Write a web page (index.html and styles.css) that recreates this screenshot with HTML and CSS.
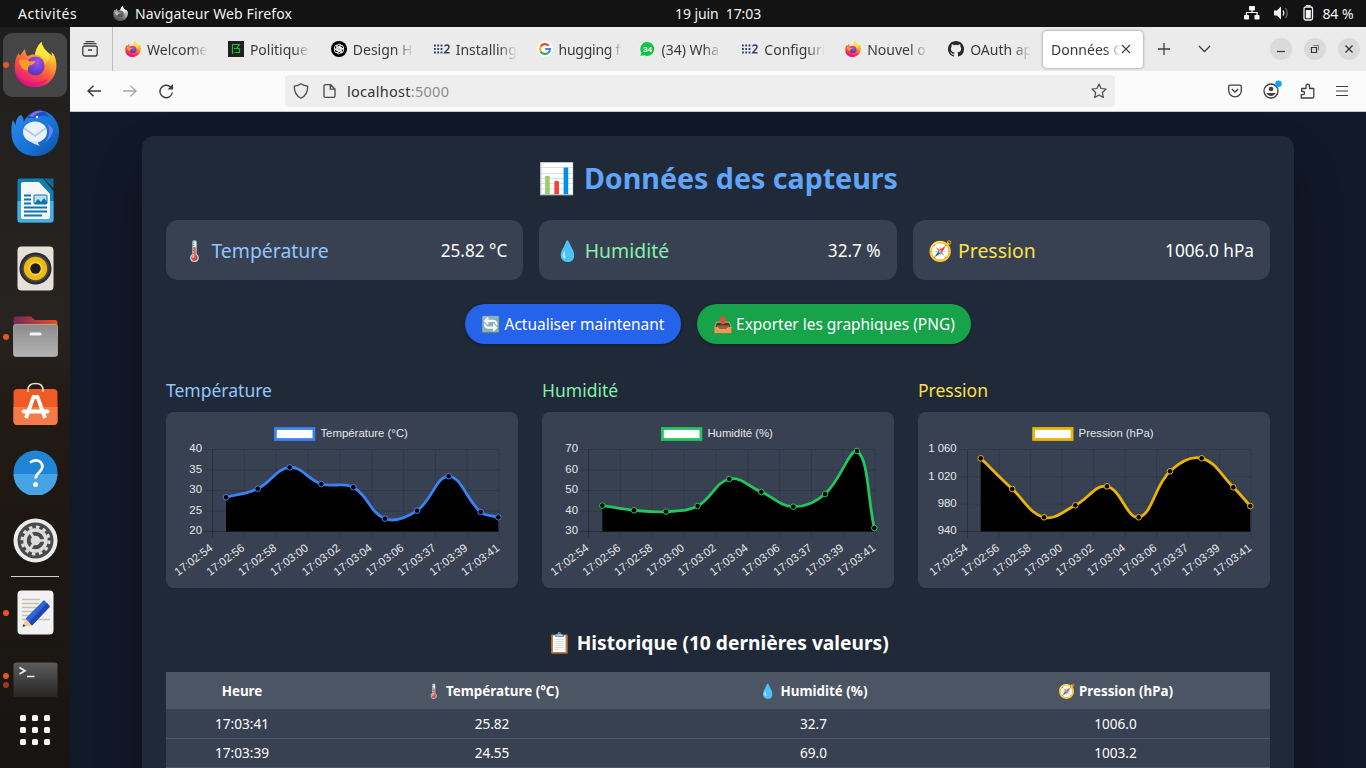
FILE: index.html
```html
<!DOCTYPE html>
<html lang="fr">
<head>
<meta charset="utf-8">
<title>Données des capteurs</title>
<link rel="stylesheet" href="styles.css">
</head>
<body>
<svg class="defs" width="0" height="0" aria-hidden="true">
  <defs>
    <linearGradient id="fxBody" x1=".85" y1="0" x2=".3" y2="1"><stop offset="0" stop-color="#fff44f"/><stop offset=".35" stop-color="#ffa436"/><stop offset=".65" stop-color="#ff4f3f"/><stop offset="1" stop-color="#e0128d"/></linearGradient>
    <linearGradient id="fxTail" x1=".4" y1="0" x2=".6" y2="1"><stop offset="0" stop-color="#fff24a"/><stop offset=".6" stop-color="#ffc02c"/><stop offset="1" stop-color="#ff7a35" stop-opacity=".5"/></linearGradient>
    <radialGradient id="fxGlobe" cx=".6" cy=".3" r=".75"><stop offset="0" stop-color="#a550f0"/><stop offset="1" stop-color="#4a35b5"/></radialGradient>
    <linearGradient id="tb" x1="0" y1="0" x2="1" y2="1"><stop offset="0" stop-color="#2c8df2"/><stop offset=".6" stop-color="#1671d4"/><stop offset="1" stop-color="#0e4ea2"/></linearGradient>
    <linearGradient id="folder" x1="0" y1="0" x2="1" y2="0"><stop offset="0" stop-color="#77295a"/><stop offset="1" stop-color="#e75122"/></linearGradient>
    <linearGradient id="grey" x1="0" y1="0" x2="0" y2="1"><stop offset="0" stop-color="#8c8c8c"/><stop offset="1" stop-color="#b4b4b4"/></linearGradient>
    <linearGradient id="term" x1="0" y1="0" x2="0" y2="1"><stop offset="0" stop-color="#5c5c5c"/><stop offset=".45" stop-color="#444"/><stop offset="1" stop-color="#262423"/></linearGradient>
  </defs>
  <symbol id="firefox" viewBox="0 0 44 44">
    <path d="M28 0C24 4 22 8 21.500 12.500 19 12 16.500 12.500 14 14 12 12 11.500 10 11.500 7 9 9 7.500 11 6.500 13.500L4.500 11C2 15 .8 19 .8 24 .8 36 10 44 22 44 34.500 44 43.400 35 43.400 23 43.400 17 41.500 13 38.500 10L39 14C37 11 33 9 31 6.500 29.500 4.500 28.500 3 28 0Z" fill="url(#fxBody)"/>
    <path d="M28 0C27 7 30 10 34 14 39 19 39 29 34 34 45 30 45 15 38.500 10L39 14C35 10 30 8 28 0ZM21.500 12.500C27 13 31 17 32 22L35 18C32 13 27 10 21.500 12.500Z" fill="url(#fxTail)"/>
    <path d="M28 0C24 4 22 8 21.500 12.500 27 12 33 15 35 19L36 12C32 9 29 6 28 0Z" fill="#ffe640"/>
    <circle cx="22" cy="23.500" r="9.300" fill="url(#fxGlobe)"/>
    <path d="M5 17.500C10 16 14 17 16 19 18 18.500 20.500 19 22 18.500 21.500 21.500 18 22 16 23 14 24.500 14 26 14.500 28 8 27 5.500 23 5 17.500Z" fill="#ff9a28"/>
    <path d="M1 28C6 39 20 43 35 36 29 44 21 44 18 43.800 8 43 2 36 1 28Z" fill="#e5107f" opacity=".65"/>
  </symbol>
  <symbol id="matrix2" viewBox="0 0 16 16">
    <path d="M0 4.500h9M0 8h9M0 11.500h9" fill="none" stroke="#34406a" stroke-width="1.800" stroke-dasharray="1.800 1.500"/>
    <path d="M10.700 5.400C11.200 3.300 15 3.300 15 6 15 8 11.500 10 10.700 11.800H15.500" fill="none" stroke="#34406a" stroke-width="1.500"/>
  </symbol>
</svg>

<header class="topbar">
  <span class="activities">Activités</span>
  <svg class="app-icon" viewBox="0 0 44 44"><use href="#firefox"/></svg>
  <span class="app-name">Navigateur Web Firefox</span>
  <span class="clock">19 juin&nbsp; 17:03</span>
  <span class="tray">
    <svg width="16" height="14" viewBox="0 0 16 14" fill="#f4f4f4"><rect x="5" y="0" width="6" height="4.500" rx=".8"/><rect x="0" y="9" width="5" height="4.500" rx=".8"/><rect x="10.500" y="9" width="5" height="4.500" rx=".8"/><path d="M2.500 9V6.500H13V9M8 4v2.500" fill="none" stroke="#f4f4f4" stroke-width="1.200"/></svg>
    <svg width="15" height="14" viewBox="0 0 15 14"><path d="M0 4.500h3L7 .5v13L3 9.500H0z" fill="#f4f4f4"/><path d="M9 4.500q1.800 2.500 0 5" fill="none" stroke="#ddd" stroke-width="1.300"/><path d="M11.500 2q3.400 5 0 10" fill="none" stroke="#777" stroke-width="1.200"/></svg>
    <svg width="11" height="16" viewBox="0 0 11 16"><rect x="1" y="2" width="8.500" height="13" rx="1.800" fill="none" stroke="#f4f4f4" stroke-width="1.300"/><path d="M3 .6h4.500" stroke="#f4f4f4" stroke-width="1.200"/><path d="M2.800 5h5v8.300h-5z" fill="#f4f4f4"/></svg>
    <span class="battery">84 %</span>
  </span>
</header>

<div class="desktop">
<nav class="dock">
  <div class="dock-item running current"><svg width="43" height="45" viewBox="0 0 44 44" preserveAspectRatio="none"><use href="#firefox"/></svg></div>
  <div class="dock-item"><svg width="48" height="46" viewBox="0 0 48 46">
    <path d="M.5 24C0 17 1 12 2 10L4.500 15C5 9 7 6 10 5 14 9 13 13 11 17 13 9 18 3 25 1 36-2 47 8 48 20 49 36 38 46 24 46 11 46 1 37 .5 24Z" fill="url(#tb)"/>
    <path d="M16 8C21 1 27 .5 31 1 35 1.500 36 4 38 7 32 4 28 7 24 8Z" fill="#1c4fc0"/><path d="M18 6C24 0 29 .5 33 1.500 28 2 24 4 22 7Z" fill="#8c6cf0"/>
    <path d="M35 12C40 18 39 28 33 33 37 31 42 25 42 19Z" fill="#6a83ee"/>
    <ellipse cx="24" cy="22" rx="12" ry="10.500" fill="#eaf2ff"/><path d="M13 18l11 8 11-8" fill="none" stroke="#b1c7e8" stroke-width="1.600"/><path d="M18 31C22 33 25 35 29 36 26 33 27 32 28 31Z" fill="#d8e2ff"/><circle cx="26" cy="7" r="1.200" fill="#fff"/></svg></div>
  <div class="dock-item"><svg width="37" height="45" viewBox="0 0 37 45">
    <path d="M3 .5H26L36.500 13V42Q36.500 44.500 34 44.500H3Q.5 44.500.5 42V3Q.5.500 3 .5Z" fill="#0c80b4"/><path d="M.5 23H36.500V42Q36.500 44.500 34 44.500H3Q.5 44.500.5 42Z" fill="#48ade0"/>
    <path d="M6 4H22L33 16V39Q33 41 31 41H6Q4 41 4 39V6Q4 4 6 4Z" fill="#f6f6f6"/><path d="M27 .5h9.500v10z" fill="#116b96"/>
    <path d="M7 17.500h7M7 21.500h7M7 25.500h7M7 29.500h23M7 33.500h23M7 37.500h18" stroke="#0f74aa" stroke-width="2"/><rect x="17" y="17" width="13" height="9" rx="1" fill="#b7e0f4" stroke="#0f74aa"/><path d="M17 26l4-5 3 3 3-4 3 4v2z" fill="#0f74aa"/></svg></div>
  <div class="dock-item"><svg width="37" height="45" viewBox="0 0 37 45"><rect x=".5" y=".5" width="36" height="44" rx="4" fill="#e5e1d7"/><circle cx="18.500" cy="22.500" r="16" fill="#2a2a35"/><circle cx="18.500" cy="22.500" r="13.800" fill="#444"/><circle cx="18.500" cy="22.500" r="11.700" fill="#eeb712"/><circle cx="18.500" cy="22.500" r="7.200" fill="#f5cf49"/><circle cx="18.500" cy="22.500" r="5.200" fill="#1c1c1e"/></svg></div>
  <div class="dock-item running"><svg width="45" height="41" viewBox="0 0 45 41"><path d="M.5 4Q.5.500 3 .5H18L22 4H42Q44.500 4 44.500 7V20H.5Z" fill="url(#folder)"/><path d="M3 8.500H42Q44.500 8.500 44.500 11V38Q44.500 40.500 42 40.500H3Q.5 40.500.5 38V11Q.5 8.500 3 8.500Z" fill="url(#grey)" stroke="#c4c4c4" stroke-width=".6"/><rect x="16.500" y="16.500" width="12" height="3" rx="1.500" fill="#f4f4f4"/></svg></div>
  <div class="dock-item store"><svg width="45" height="43" viewBox="0 0 45 43"><rect x=".5" y="7" width="44" height="36" rx="4" fill="#ef5a25"/><path d="M.5 25H44.500V39Q44.500 43 40.500 43H4.500Q.5 43 .5 39Z" fill="#f47b45"/><path d="M15 10V8Q15 1.500 22.500 1.500T30 8V10" fill="none" stroke="#fae0b4" stroke-width="1.600"/><path d="M13 36 20.500 15H24.500L32 36" fill="none" stroke="#fff" stroke-width="3.800" stroke-linejoin="round"/><path d="M10.500 29.500H34.500" stroke="#fff" stroke-width="4" stroke-linecap="round"/></svg></div>
  <div class="dock-item"><svg width="45" height="45" viewBox="0 0 45 45"><circle cx="22.500" cy="22.500" r="22" fill="#1d84d6"/><path d="M.5 24H44.500A22 22 0 0 1 .5 24Z" fill="#46a3e6"/><path d="M17 12.500Q23 8.500 27.500 12 32 17 26 22.500 22.500 25.500 22.800 28.500" fill="none" stroke="#fff" stroke-width="2.700"/><circle cx="22.500" cy="34.500" r="2.500" fill="#fff"/></svg></div>
  <div class="dock-item"><svg width="45" height="45" viewBox="0 0 45 45"><circle cx="22.500" cy="22.500" r="22" fill="#ececec"/><circle cx="22.500" cy="22.500" r="18" fill="#4a4a4a"/><circle cx="22.500" cy="22.500" r="13.500" fill="none" stroke="#ddd" stroke-width="3" stroke-dasharray="3.500 3.570"/><circle cx="22.500" cy="22.500" r="10.500" fill="none" stroke="#ddd" stroke-width="3.500"/><circle cx="22.500" cy="22.500" r="6.500" fill="#4a4a4a"/><circle cx="22.500" cy="22.500" r="4.800" fill="#ddd"/><path d="M22.500 22.500H32M22.500 22.500 17 14M22.500 22.500 17 31" stroke="#ddd" stroke-width="2.500"/></svg></div>
  <div class="dock-sep"></div>
  <div class="dock-item running"><svg width="37" height="45" viewBox="0 0 37 45"><rect x=".5" y=".5" width="36" height="44" rx="4" fill="#f1f1f1"/><path d="M5 9.500H23M5 13.500H22M5 17.500H25M5 21.500H20M5 25.500H18M5 29.500H33" stroke="#c5c1b3" stroke-width="1.600"/><path d="M5.500 37 8.500 28.500 15 35.500Z" fill="#f6ca90"/><path d="M5.500 37l1-3 2 2z" fill="#444"/><path d="M8.500 28.500 27 10 33 16.500 15 35.500Z" fill="#2f65dc"/><path d="M12 32 30 13 33 16.500 15 35.500Z" fill="#1f47ad"/></svg></div>
  <div class="dock-item terminal running"><svg width="45" height="35" viewBox="0 0 45 35"><path d="M.5 35V3.500Q.5.500 3.500.500H41.500Q44.500.500 44.500 3.500V35Z" fill="url(#term)"/><path d="M6.500 5.500 12 8.800 6.500 12M14 14.500h7.500" fill="none" stroke="#f2f2f2" stroke-width="1.700"/></svg></div>
  <div class="apps"><i></i><i></i><i></i><i></i><i></i><i></i><i></i><i></i><i></i></div>
</nav>

<section class="browser">
  <div class="tabstrip">
    <div class="tab-history"><svg width="16" height="16" viewBox="0 0 16 16" fill="none" stroke="#3f3f3f" stroke-width="1.300"><rect x=".8" y="5" width="14.400" height="10" rx="2"/><path d="M1.500 2.700H14.500M3.500 .6h9M6 9h4"/></svg></div>
    <div class="tabs">
      <div class="tab"><svg viewBox="0 0 44 44"><use href="#firefox"/></svg><span>Welcome</span></div>
      <div class="tab"><svg viewBox="0 0 16 16"><path fill="#211f23" d="M0 0h16v16H0z"/><path d="M4.500 3V13M4.500 3.500H11.500L9 7 11.500 8V11.500H6.500M6 7.500H9" fill="none" stroke="#15c236" stroke-width="1.200"/></svg><span>Politique</span></div>
      <div class="tab"><svg viewBox="0 0 16 16"><circle cx="8" cy="8" r="8" fill="#000"/><g fill="none" stroke="#fff" stroke-width=".9"><path id="petal" d="M5.800 9.300V5.500Q6 3.200 8 3.200 9.500 3.200 10.300 4.300L7 6.300V8.700"/><use href="#petal" transform="rotate(60 8 8)"/><use href="#petal" transform="rotate(120 8 8)"/><use href="#petal" transform="rotate(180 8 8)"/><use href="#petal" transform="rotate(240 8 8)"/><use href="#petal" transform="rotate(300 8 8)"/></g></svg><span>Design H</span></div>
      <div class="tab"><svg viewBox="0 0 16 16"><use href="#matrix2"/></svg><span>Installing</span></div>
      <div class="tab"><svg viewBox="0 0 16 16"><circle cx="8" cy="8" r="8" fill="#fff"/><g fill="none" stroke-width="2.200"><path d="M11.600 4.700A5 5 0 0 0 3.700 5.500" stroke="#ea4335"/><path d="M3.700 5.500A5 5 0 0 0 3.700 10.500" stroke="#fbbc05"/><path d="M3.700 10.500A5 5 0 0 0 11.200 11.800" stroke="#34a853"/><path d="M11.200 11.800A5 5 0 0 0 13 8H8.200" stroke="#4285f4"/></g></svg><span class="tight">hugging f</span></div>
      <div class="tab"><svg viewBox="0 0 16 16"><path d="M8.300 .5A7.500 7.500 0 1 1 4.800 14.700L.8 15.500 1.800 11.700A7.500 7.500 0 0 1 8.300 .5Z" fill="#15c243" stroke="#fff" stroke-width=".8"/><text x="8.500" y="11" text-anchor="middle" class="badge">34</text></svg><span>(34) Wha</span></div>
      <div class="tab"><svg viewBox="0 0 16 16"><use href="#matrix2"/></svg><span>Configuri</span></div>
      <div class="tab"><svg viewBox="0 0 44 44"><use href="#firefox"/></svg><span>Nouvel o</span></div>
      <div class="tab"><svg viewBox="0 0 16 16"><path fill="#24292f" d="M8 0C3.580 0 0 3.580 0 8c0 3.540 2.290 6.530 5.470 7.590.4.070.55-.17.55-.38v-1.490c-2.230.48-2.700-.95-2.700-.95-.36-.92-.89-1.170-.89-1.170-.73-.5.060-.49.060-.49.8.060 1.230.83 1.230.83.71 1.220 1.870.87 2.330.66.070-.52.280-.87.5-1.070-1.780-.2-3.640-.89-3.640-3.950 0-.87.310-1.590.82-2.150-.08-.2-.36-1.020.08-2.120 0 0 .67-.21 2.200.82a7.600 7.600 0 0 1 4 0c1.530-1.040 2.200-.82 2.200-.82.44 1.100.16 1.920.08 2.120.51.56.82 1.270.82 2.150 0 3.070-1.870 3.750-3.650 3.950.29.25.54.73.54 1.480v2.190c0 .21.150.46.550.38A8 8 0 0 0 16 8c0-4.420-3.580-8-8-8z"/></svg><span>OAuth ap</span></div>
      <div class="tab active"><span>Données C</span><svg viewBox="0 0 10 10"><path d="M1 1l8 8M9 1L1 9" stroke="#3f3f3f" stroke-width="1.100"/></svg></div>
    </div>
    <svg class="plus" width="12" height="12" viewBox="0 0 12 12"><path d="M6 0v12M0 6h12" stroke="#3f3f3f" stroke-width="1.300"/></svg>
    <svg class="chev" width="13" height="8" viewBox="0 0 13 8"><path d="M1 1l5.500 5.500L12 1" fill="none" stroke="#3f3f3f" stroke-width="1.300"/></svg>
    <div class="win">
      <span><svg viewBox="0 0 10 10"><path d="M1 7.500h8" stroke="#333" stroke-width="1.200"/></svg></span>
      <span><svg viewBox="0 0 10 10" fill="none"><path d="M3.500 1.500h5v5" stroke="#777"/><path d="M1.500 3.500h5v5h-5z" stroke="#333" stroke-width="1.200"/></svg></span>
      <span><svg viewBox="0 0 10 10"><path d="M1.500 1.500l7 7M8.500 1.500l-7 7" stroke="#333" stroke-width="1.300"/></svg></span>
    </div>
  </div>

  <div class="navbar">
    <svg class="back" width="14" height="12" viewBox="0 0 14 12"><path d="M14 6H1M6.500.700 1 6l5.500 5.300" fill="none" stroke="#3a3a3a" stroke-width="1.400"/></svg>
    <svg class="fwd" width="14" height="12" viewBox="0 0 14 12"><path d="M0 6h13M7.500.700 13 6l-5.500 5.300" fill="none" stroke="#a9a9a9" stroke-width="1.400"/></svg>
    <svg class="reload" width="15" height="15" viewBox="0 0 15 15"><path d="M13.300 8.500A6.200 6.200 0 1 1 11.500 3" fill="none" stroke="#3a3a3a" stroke-width="1.400"/><path d="M14 0v5.500H8.500z" fill="#3a3a3a"/></svg>
    <div class="urlbar">
      <svg width="16" height="16" viewBox="0 0 16 16"><path d="M8 .8Q11 2.800 14.700 3.200 15 11.500 8 15.200 1 11.500 1.300 3.200 5 2.800 8 .8Z" fill="none" stroke="#4a4a4a" stroke-width="1.300" stroke-linejoin="round"/></svg>
      <svg class="doc" width="13" height="14" viewBox="0 0 13 14"><path d="M2.500.700H7.500L12 5V12Q12 13.300 10.700 13.300H2.500Q1 13.300 1 12V2Q1 .700 2.500.700ZM7.300.700V5.200H12" fill="none" stroke="#4a4a4a" stroke-width="1.300"/></svg>
      <span class="url">localhost<em>:5000</em></span>
      <svg class="star" width="16" height="16" viewBox="0 0 16 16"><path d="M8 1 10.100 5.500 15 6 11.400 9.500 12.300 14.500 8 12.100 3.700 14.500 4.600 9.500 1 6 5.900 5.500Z" fill="none" stroke="#4a4a4a" stroke-width="1.200" stroke-linejoin="round"/></svg>
    </div>
    <div class="tools">
      <svg width="14" height="14" viewBox="0 0 14 14" fill="none" stroke="#3f3f3f" stroke-width="1.300"><path d="M2 1.200H12Q13.300 1.200 13.300 2.500V6.500A6.300 6.300 0 0 1 .7 6.500V2.500Q.7 1.200 2 1.200ZM3.800 5 7 8l3.200-3"/></svg>
      <svg class="account" width="16" height="16" viewBox="0 0 16 16"><circle cx="8" cy="8" r="7" fill="none" stroke="#3f3f3f" stroke-width="1.300"/><circle cx="8" cy="6" r="2.300" fill="#3f3f3f"/><path d="M3.500 10H12.500Q11 13 8 13 5 13 3.500 10Z" fill="#3f3f3f"/><circle class="dot" cx="15.500" cy=".8" r="3.200" fill="#00a8f5"/></svg>
      <svg width="15" height="16" viewBox="0 0 15 16"><path d="M1.200 15H12.500Q13.800 15 13.800 13.800V5.500H9.500V3A1.700 1.700 0 0 0 6 3V5.500H1.700V8.500H3A1.500 1.500 0 0 1 3 11.700H1.200Z" fill="none" stroke="#3f3f3f" stroke-width="1.300" stroke-linejoin="round"/></svg>
      <svg width="12" height="12" viewBox="0 0 12 12"><path d="M0 1.500h12M0 6h12M0 10.500h12" stroke="#3f3f3f" stroke-width="1.200"/></svg>
    </div>
  </div>

  <main class="page">
    <div class="panel">
      <h1><span class="emoji">📊</span> <span class="t">Données des capteurs</span></h1>
      <div class="stats">
        <div class="stat blue"><b><span class="emoji">🌡️</span><span class="t">Température</span></b><span class="v">25.82 °C</span></div>
        <div class="stat green"><b><span class="emoji">💧</span><span class="t">Humidité</span></b><span class="v">32.7 %</span></div>
        <div class="stat yellow"><b><span class="emoji">🧭</span><span class="t">Pression</span></b><span class="v">1006.0 hPa</span></div>
      </div>
      <div class="actions">
        <button class="refresh"><span class="emoji">🔄</span><span class="t">Actualiser maintenant</span></button>
        <button class="export"><span class="emoji">📤</span><span class="t">Exporter les graphiques (PNG)</span></button>
      </div>
      <div class="charts">
        <div class="blue"><h2>Température</h2><div class="chart" id="temp"></div></div>
        <div class="green"><h2>Humidité</h2><div class="chart" id="hum"></div></div>
        <div class="yellow"><h2>Pression</h2><div class="chart" id="pres"></div></div>
      </div>
      <h3><span class="emoji">📋</span><span class="t">Historique (10 dernières valeurs)</span></h3>
      <table>
        <colgroup><col class="c1"><col class="c2"><col class="c3"><col class="c4"></colgroup>
        <thead><tr><th>Heure</th><th><span class="emoji">🌡️</span>Température (°C)</th><th><span class="emoji">💧</span>Humidité (%)</th><th><span class="emoji">🧭</span>Pression (hPa)</th></tr></thead>
        <tbody>
          <tr><td>17:03:41</td><td>25.82</td><td>32.7</td><td>1006.0</td></tr>
          <tr><td>17:03:39</td><td>24.55</td><td>69.0</td><td>1003.2</td></tr>
          <tr><td></td><td></td><td></td><td></td></tr>
        </tbody>
      </table>
    </div>
  </main>
</section>
</div>
<script src="charts.js"></script>
</body>
</html>
```

FILE: styles.css
```css
* { box-sizing: border-box; }
body { margin: 0; width: 1366px; height: 768px; overflow: hidden; background: #111827; font-family: "Noto Sans", "Open Sans", sans-serif; }
.defs { position: absolute; }
svg { display: block; flex: none; }

.topbar { height: 27px; background: #131313; color: #f2f2f2; display: grid; grid-template-columns: 95px 36px 544px 1fr auto; align-items: center; font-size: 14px; letter-spacing: .13px; white-space: nowrap; }
.activities { padding-left: 18px; letter-spacing: .5px; }
.app-icon { width: 15px; height: 15px; justify-self: end; margin: 0 3px 1px 0; filter: grayscale(1) brightness(1.1); }
.app-name { padding-left: 4px; }
.clock { letter-spacing: -.08px; margin-top: -1px; }
.tray { display: flex; align-items: center; padding-right: 12.500px; gap: 14px; }
.tray svg { margin-top: -1px; }
.battery { margin-left: -6px; letter-spacing: -.05px; }

.desktop { display: flex; height: 741px; }
.dock { width: 70px; padding-top: 4px; background: linear-gradient(180deg, #201f1e 0, #272320 40%, #211a15 52%, #1d1712 70%, #171615 100%); }
.dock-item { position: relative; height: 68px; display: flex; align-items: center; justify-content: center; padding: 0 0 1px 0; }
.dock-item > svg { margin-left: .500px; }
.dock-item.current::after { content: ""; position: absolute; inset: 2px 3px; border-radius: 9px; background: #454545; }
.dock-item.current svg { position: relative; z-index: 1; }
.dock-item.running::before { content: ""; position: absolute; z-index: 2; left: 3px; top: 31px; width: 6px; height: 6px; border-radius: 50%; background: #e95420; }
.store svg { margin-top: -3px; }
.dock-sep { height: 1px; margin: 1px 11px 2px; background: #d2cdc9; }
.dock-item.terminal { height: 55px; align-items: flex-start; padding-top: 15px; }
.dock-item.terminal::before { top: 26px; box-shadow: 0 9px 0 #9a3b18; }
.apps { display: grid; grid-template-columns: repeat(3, 6px); gap: 6px; justify-content: center; padding-top: 13px; }
.apps i { height: 6px; border-radius: 1.500px; background: #f5f5f5; }

.browser { flex: 1; min-width: 0; display: flex; flex-direction: column; }
.tabstrip { height: 44px; flex: none; background: #ebebeb; display: flex; align-items: center; color: #3a3a3a; }
.tab-history { width: 43px; height: 44px; border-right: 1px solid #bdbdbd; display: flex; align-items: center; padding-left: 12px; }
.tabs { display: flex; width: 1030px; padding-left: 12px; height: 38px; align-items: center; }
.tab { width: 102.900px; flex: none; display: flex; align-items: center; gap: 6px; font-size: 14px; letter-spacing: 0; }
.tab > svg { width: 16px; height: 16px; }
.tab span { width: 61px; overflow: hidden; white-space: nowrap; line-height: 22px; padding-top: 1px; -webkit-mask-image: linear-gradient(90deg, #000 70%, transparent); mask-image: linear-gradient(90deg, #000 70%, transparent); }
.tab .tight { letter-spacing: -.25px; -webkit-mask-image: linear-gradient(90deg, #000 82%, rgba(0,0,0,.15)); mask-image: linear-gradient(90deg, #000 82%, rgba(0,0,0,.15)); }
.tab.active { width: 100px; height: 37px; background: #fff; border-radius: 4px; box-shadow: 0 0 3px rgba(0,0,0,.45); padding-left: 8.500px; margin-left: -8.500px; gap: 0; }
.tab.active span { width: 70px; -webkit-mask-image: linear-gradient(90deg, #000 78%, transparent); mask-image: linear-gradient(90deg, #000 78%, transparent); }
.tab.active > svg { width: 10px; height: 10px; }
.badge { font: bold 8px "Liberation Sans", sans-serif; fill: #fff; letter-spacing: 0; }
.plus { margin-left: 14.500px; }
.chev { margin-left: 28.500px; }
.win { display: flex; gap: 12px; margin-left: auto; padding-right: 6px; }
.win span { width: 22px; height: 22px; border-radius: 50%; background: #dadada; display: grid; place-items: center; }
.win svg { width: 10px; height: 10px; }

.navbar { height: 41px; flex: none; background: #fbfbfb; border-bottom: 1px solid #c6c6c6; display: flex; align-items: center; }
.back { margin-left: 17px; }
.fwd { margin-left: 22px; }
.reload { margin-left: 22px; }
.urlbar { margin-left: 111px; width: 830px; height: 32px; background: #eee; border-radius: 4px; display: flex; align-items: center; padding: 0 8px; }
.doc { margin-left: 14px; }
.url { margin-left: 11px; font-size: 14.500px; letter-spacing: .28px; color: #333; }
.url em { font-style: normal; color: #8c8c8c; }
.star { margin-left: auto; }
.tools { flex: 1; display: flex; align-items: center; gap: 21px; justify-content: flex-end; padding-right: 18.300px; }
.account { overflow: visible; }

.page { flex: 1; min-height: 0; background: #111827; padding: 24px 72px; overflow: hidden; }
.panel { height: 900px; background: #1f2937; border-radius: 12px; padding: 24px; color: #fff; box-shadow: 0 25px 50px -12px rgba(0,0,0,.4); }
.emoji { font-family: "Noto Color Emoji", sans-serif; font-weight: 400; letter-spacing: 0; }
h1 { margin: 0; height: 36px; line-height: 36px; display: flex; justify-content: center; gap: 8.500px; font-size: 28.600px; color: #60a5fa; }
h1 .emoji { font-size: 30px; margin-top: 1px; }
.stats { display: grid; grid-template-columns: repeat(3, 1fr); gap: 16px; margin-top: 24px; }
.stat { height: 60px; border-radius: 12px; background: #374151; padding: 2px 16px 0; display: flex; justify-content: space-between; align-items: center; line-height: 28px; }
.stat b { font-weight: 400; font-size: 19.400px; display: flex; gap: 4.500px; }
.stat .emoji { font-size: 20px; }
.stat .v { font-size: 17.200px; color: #fff; }
.blue { color: #93c5fd; }
.green { color: #86efac; }
.yellow { color: #fde047; }
.actions { display: flex; justify-content: center; gap: 16px; margin-top: 24px; }
button { height: 40px; border: 0; border-radius: 20px; color: #fff; font-family: inherit; font-size: 15.450px; display: flex; align-items: center; justify-content: center; gap: 3px; padding: 0; white-space: nowrap; box-shadow: 0 1px 3px rgba(0,0,0,.3); }
button .emoji { font-size: 16px; }
.refresh { width: 216px; background: #2563eb; }
.export { width: 274px; background: #16a34a; }
.charts { display: grid; grid-template-columns: repeat(3, 1fr); gap: 24px; margin-top: 32px; }
h2 { margin: 0 0 8px; font-size: 17.500px; font-weight: 400; line-height: 28px; }
.chart { height: 176px; border-radius: 8px; background: #374151; }
.chart text { font-family: "Liberation Sans", Arial, sans-serif; font-size: 11.400px; fill: #e5e7eb; }
h3 { margin: 41px 0 0; height: 28px; line-height: 28px; font-size: 19.200px; display: flex; justify-content: center; gap: 4.500px; }
h3 .emoji { font-size: 20px; }
table { width: 1104px; margin-top: 15px; border-collapse: collapse; table-layout: fixed; text-align: center; font-size: 13.600px; }
.c1 { width: 152px; }
.c2 { width: 348px; }
.c3 { width: 295px; }
.c4 { width: 309px; }
th { height: 37px; padding: 0; background: #4b5563; font-size: 13.400px; line-height: 20px; }
th .emoji { font-size: 14px; margin-right: 3.500px; }
td { height: 29px; padding: 1px 0 0; background: #374151; border-bottom: 1px solid #4b5563; line-height: 20px; }
```

FILE: charts.js
```js
const times = ['17:02:54', '17:02:56', '17:02:58', '17:03:00', '17:03:02', '17:03:04', '17:03:06', '17:03:37', '17:03:39', '17:03:41'];
const TOP = 37.5, BOTTOM = 119.5, RIGHT = 333.2;

// Cubic spline whose handles follow the neighbouring points.
function curve(pts) {
  const t = 0.4;
  const handles = pts.map((p, i) => {
    const a = pts[i - 1] || p, b = pts[i + 1] || p;
    const d1 = Math.hypot(p[0] - a[0], p[1] - a[1]), d2 = Math.hypot(b[0] - p[0], b[1] - p[1]);
    const f1 = t * d1 / (d1 + d2), f2 = t * d2 / (d1 + d2);
    const cap = y => Math.max(TOP, Math.min(BOTTOM, y));
    return [[p[0] - f1 * (b[0] - a[0]), cap(p[1] - f1 * (b[1] - a[1]))], [p[0] + f2 * (b[0] - a[0]), cap(p[1] + f2 * (b[1] - a[1]))]];
  });
  return 'M' + pts[0] + pts.slice(1).map((p, i) => `C${handles[i][1]} ${handles[i + 1][0]} ${p}`).join('');
}

function draw(id, o) {
  let s = '';
  o.ticks.forEach((label, i) => {
    const y = TOP + i * (BOTTOM - TOP) / (o.ticks.length - 1);
    s += `<path d="M${o.left - 8.500} ${y}H${RIGHT}" stroke="#000" stroke-opacity="${i === o.ticks.length - 1 ? .25 : .13}"/>`;
    s += `<text x="${o.tickX}" y="${y + 2.8}" text-anchor="end">${label}</text>`;
  });
  times.forEach((label, i) => {
    const x = o.left + i * (RIGHT - o.left) / 9;
    s += `<path d="M${x} ${TOP}V126" stroke="#000" stroke-opacity="${i ? .13 : .25}"/>`;
    s += `<text transform="translate(${x + 1} 137.500) rotate(-37)" text-anchor="end">${label}</text>`;
  });
  const line = curve(o.points), last = o.points[9];
  s += `<path d="${line}L${last[0]} ${BOTTOM}H${o.points[0][0]}Z" fill="#000"/>`;
  s += `<path d="${line}" fill="none" stroke="${o.color}" stroke-width="2.800"/>`;
  o.points.forEach(p => { s += `<circle cx="${p[0]}" cy="${p[1]}" r="2.800" fill="#000" stroke="${o.color}" stroke-width="1"/>`; });
  s += `<rect x="${o.legend}" y="16.500" width="38.500" height="11" fill="#fff" stroke="${o.color}" stroke-width="2.800"/>`;
  s += `<text x="${o.legend + 45}" y="25.200" textLength="${o.width}">${o.title}</text>`;
  document.getElementById(id).innerHTML = `<svg width="352" height="176">${s}</svg>`;
}

draw('temp', { title: 'Température (°C)', width: 87.5, color: '#3b82f6', legend: 109.4, left: 46.5, tickX: 36, ticks: ['40', '35', '30', '25', '20'],
  points: [[60, 85.3], [91.700, 76.700], [123.700, 55.300], [155.300, 72], [187.300, 75.300], [219, 106.700], [251, 98.700], [282.700, 64.300], [314.700, 100], [332.300, 105.300]] });
draw('hum', { title: 'Humidité (%)', width: 65.5, color: '#22c55e', legend: 120.4, left: 46.5, tickX: 36, ticks: ['70', '60', '50', '40', '30'],
  points: [[60.300, 93.600], [92, 98.300], [124, 99.600], [155.600, 94], [187.300, 67], [219.300, 80], [251.300, 94.700], [283, 82], [315, 39], [332.300, 116]] });
draw('pres', { title: 'Pression (hPa)', width: 75, color: '#eab308', legend: 115.6, left: 49.5, tickX: 38.7, ticks: ['1 060', '1 020', '980', '940'],
  points: [[62.700, 46.300], [94.300, 77], [126, 105.300], [157.300, 93.300], [189, 74.300], [220.700, 105.300], [252, 59.300], [283.700, 46.300], [315.300, 75.300], [332.300, 94]] });
```
